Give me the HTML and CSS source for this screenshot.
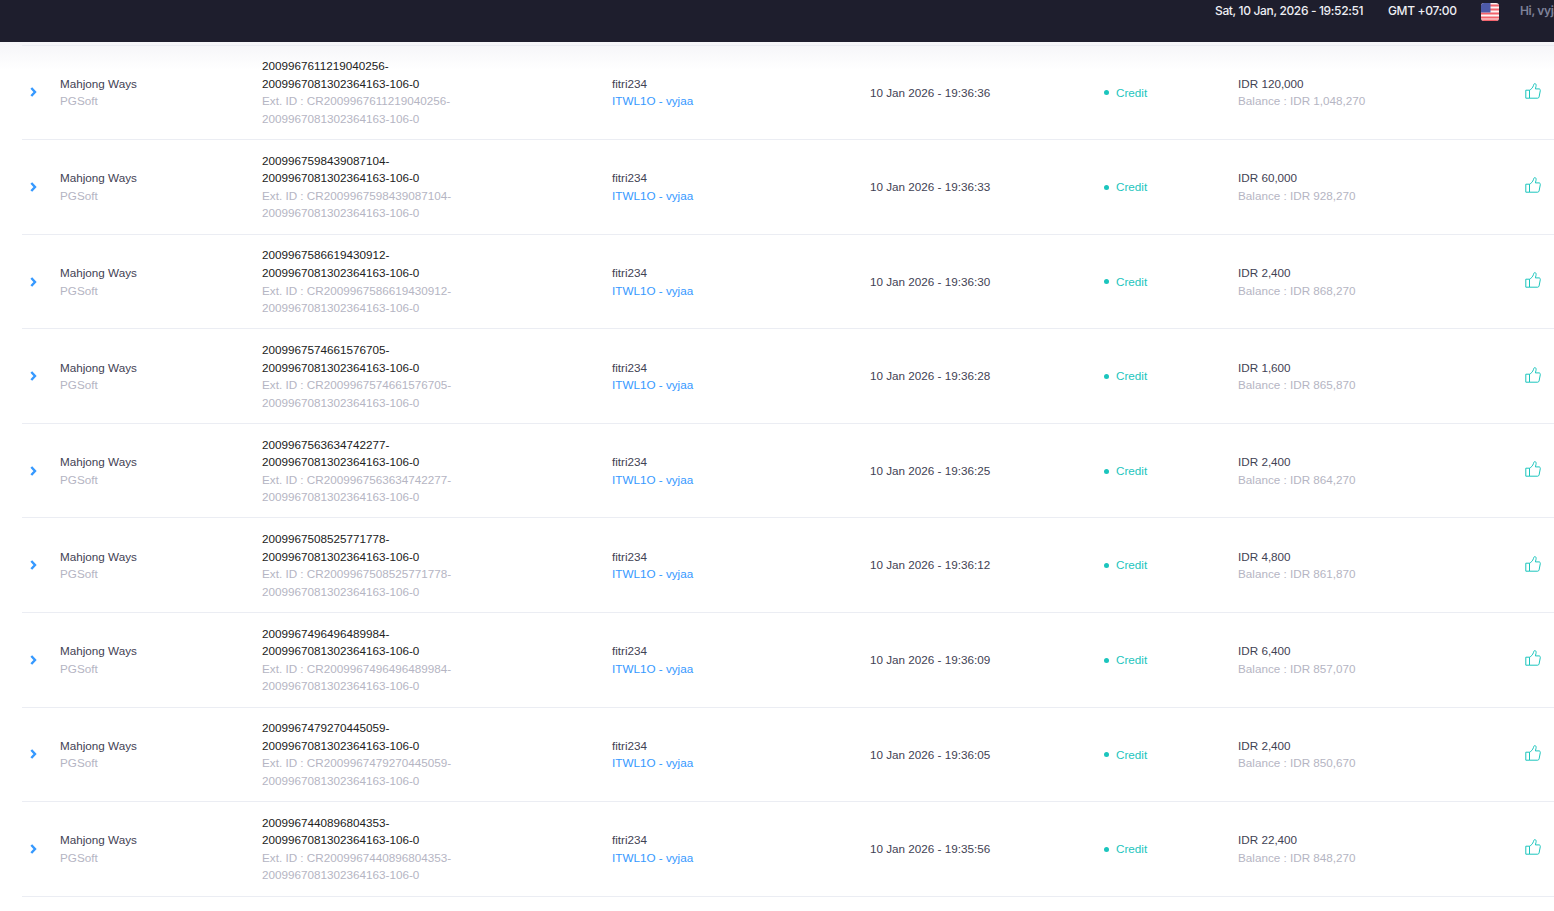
FILE: index.html
```html
<!DOCTYPE html>
<html lang="en">
<head>
    <meta charset="UTF-8">
    <title>Transactions</title>
    <link rel="stylesheet" href="styles.css">
</head>
<body>
    <svg class="sprites" width="0" height="0">
        <symbol id="chevron" viewBox="0 0 7 10"><path d="M1.300 1l3.700 4-3.700 4" fill="none" stroke="currentColor" stroke-width="2.400"/></symbol>
        <symbol id="thumb" viewBox="0 0 16 16"><path d="M4.500 7.200v8H.8v-8zM4.500 7.200c1.800-.9 3.200-2.500 3.900-4.500.3-.9.5-2.100 1.400-2.100 1.300 0 1.500 1.500 1.200 2.800l-.6 2.500h3.600c.9 0 1.500.8 1.300 1.700l-1.200 6.300c-.1.700-.7 1.300-1.400 1.300H4.500" fill="none" stroke="currentColor" stroke-width="1"/></symbol>
    </svg>

    <header class="topbar">
        <span class="topbar-date">Sat, 10 Jan, 2026 - 19:52:51</span>
        <span class="topbar-gmt">GMT +07:00</span>
        <svg class="flag" viewBox="0 0 18 18">
            <rect width="18" height="18" fill="#fdf3f3"/>
            <path d="M0 1.500h18v2H0zM0 5.500h18v2H0zM0 9.500h18v2H0zM0 13.500h18v2H0z" fill="#f2626b"/>
            <path d="M0 16.500h18V18H0z" fill="#f2626b"/>
            <rect width="9.500" height="9.500" fill="#4d5aa8"/>
        </svg>
        <span class="topbar-user">Hi, vyjaa</span>
    </header>

    <main class="list">
        <!-- Baris transaksi -->
        <div class="row">
            <svg class="chevron"><use href="#chevron"/></svg>
            <div><div>Mahjong Ways</div><div class="muted">PGSoft</div></div>
            <div class="ids">2009967611219040256-2009967081302364163-106-0<div class="muted">Ext. ID : CR2009967611219040256-2009967081302364163-106-0</div></div>
            <div><div>fitri234</div><div class="link">ITWL1O - vyjaa</div></div>
            <div>10 Jan 2026 - 19:36:36</div>
            <div class="credit"><span class="dot"></span>Credit</div>
            <div><div>IDR 120,000</div><div class="muted">Balance : IDR 1,048,270</div></div>
            <svg class="thumb"><use href="#thumb"/></svg>
        </div>
        <div class="row">
            <svg class="chevron"><use href="#chevron"/></svg>
            <div><div>Mahjong Ways</div><div class="muted">PGSoft</div></div>
            <div class="ids">2009967598439087104-2009967081302364163-106-0<div class="muted">Ext. ID : CR2009967598439087104-2009967081302364163-106-0</div></div>
            <div><div>fitri234</div><div class="link">ITWL1O - vyjaa</div></div>
            <div>10 Jan 2026 - 19:36:33</div>
            <div class="credit"><span class="dot"></span>Credit</div>
            <div><div>IDR 60,000</div><div class="muted">Balance : IDR 928,270</div></div>
            <svg class="thumb"><use href="#thumb"/></svg>
        </div>
        <div class="row">
            <svg class="chevron"><use href="#chevron"/></svg>
            <div><div>Mahjong Ways</div><div class="muted">PGSoft</div></div>
            <div class="ids">2009967586619430912-2009967081302364163-106-0<div class="muted">Ext. ID : CR2009967586619430912-2009967081302364163-106-0</div></div>
            <div><div>fitri234</div><div class="link">ITWL1O - vyjaa</div></div>
            <div>10 Jan 2026 - 19:36:30</div>
            <div class="credit"><span class="dot"></span>Credit</div>
            <div><div>IDR 2,400</div><div class="muted">Balance : IDR 868,270</div></div>
            <svg class="thumb"><use href="#thumb"/></svg>
        </div>
        <div class="row">
            <svg class="chevron"><use href="#chevron"/></svg>
            <div><div>Mahjong Ways</div><div class="muted">PGSoft</div></div>
            <div class="ids">2009967574661576705-2009967081302364163-106-0<div class="muted">Ext. ID : CR2009967574661576705-2009967081302364163-106-0</div></div>
            <div><div>fitri234</div><div class="link">ITWL1O - vyjaa</div></div>
            <div>10 Jan 2026 - 19:36:28</div>
            <div class="credit"><span class="dot"></span>Credit</div>
            <div><div>IDR 1,600</div><div class="muted">Balance : IDR 865,870</div></div>
            <svg class="thumb"><use href="#thumb"/></svg>
        </div>
        <div class="row">
            <svg class="chevron"><use href="#chevron"/></svg>
            <div><div>Mahjong Ways</div><div class="muted">PGSoft</div></div>
            <div class="ids">2009967563634742277-2009967081302364163-106-0<div class="muted">Ext. ID : CR2009967563634742277-2009967081302364163-106-0</div></div>
            <div><div>fitri234</div><div class="link">ITWL1O - vyjaa</div></div>
            <div>10 Jan 2026 - 19:36:25</div>
            <div class="credit"><span class="dot"></span>Credit</div>
            <div><div>IDR 2,400</div><div class="muted">Balance : IDR 864,270</div></div>
            <svg class="thumb"><use href="#thumb"/></svg>
        </div>
        <div class="row">
            <svg class="chevron"><use href="#chevron"/></svg>
            <div><div>Mahjong Ways</div><div class="muted">PGSoft</div></div>
            <div class="ids">2009967508525771778-2009967081302364163-106-0<div class="muted">Ext. ID : CR2009967508525771778-2009967081302364163-106-0</div></div>
            <div><div>fitri234</div><div class="link">ITWL1O - vyjaa</div></div>
            <div>10 Jan 2026 - 19:36:12</div>
            <div class="credit"><span class="dot"></span>Credit</div>
            <div><div>IDR 4,800</div><div class="muted">Balance : IDR 861,870</div></div>
            <svg class="thumb"><use href="#thumb"/></svg>
        </div>
        <div class="row">
            <svg class="chevron"><use href="#chevron"/></svg>
            <div><div>Mahjong Ways</div><div class="muted">PGSoft</div></div>
            <div class="ids">2009967496496489984-2009967081302364163-106-0<div class="muted">Ext. ID : CR2009967496496489984-2009967081302364163-106-0</div></div>
            <div><div>fitri234</div><div class="link">ITWL1O - vyjaa</div></div>
            <div>10 Jan 2026 - 19:36:09</div>
            <div class="credit"><span class="dot"></span>Credit</div>
            <div><div>IDR 6,400</div><div class="muted">Balance : IDR 857,070</div></div>
            <svg class="thumb"><use href="#thumb"/></svg>
        </div>
        <div class="row">
            <svg class="chevron"><use href="#chevron"/></svg>
            <div><div>Mahjong Ways</div><div class="muted">PGSoft</div></div>
            <div class="ids">2009967479270445059-2009967081302364163-106-0<div class="muted">Ext. ID : CR2009967479270445059-2009967081302364163-106-0</div></div>
            <div><div>fitri234</div><div class="link">ITWL1O - vyjaa</div></div>
            <div>10 Jan 2026 - 19:36:05</div>
            <div class="credit"><span class="dot"></span>Credit</div>
            <div><div>IDR 2,400</div><div class="muted">Balance : IDR 850,670</div></div>
            <svg class="thumb"><use href="#thumb"/></svg>
        </div>
        <div class="row">
            <svg class="chevron"><use href="#chevron"/></svg>
            <div><div>Mahjong Ways</div><div class="muted">PGSoft</div></div>
            <div class="ids">2009967440896804353-2009967081302364163-106-0<div class="muted">Ext. ID : CR2009967440896804353-2009967081302364163-106-0</div></div>
            <div><div>fitri234</div><div class="link">ITWL1O - vyjaa</div></div>
            <div>10 Jan 2026 - 19:35:56</div>
            <div class="credit"><span class="dot"></span>Credit</div>
            <div><div>IDR 22,400</div><div class="muted">Balance : IDR 848,270</div></div>
            <svg class="thumb"><use href="#thumb"/></svg>
        </div>
    </main>
</body>
</html>
```

FILE: styles.css
```css
html, body {
    height: 100%;
}

body {
    margin: 0;
    overflow: hidden;
    background: #fff;
    color: #3f4254;
    font-family: "Liberation Sans", Arial, sans-serif;
    font-size: 11.7px;
    line-height: 1.5;
}

.sprites {
    position: absolute;
}

/* Barra superior */
.topbar {
    display: flex;
    align-items: flex-start;
    width: 1554px;
    height: 42px;
    padding-left: 1215px;
    box-sizing: border-box;
    background: #1e1e2d;
    color: #eeeff4;
    font-family: Inter, sans-serif;
    font-size: 12px;
    font-weight: 500;
    line-height: 22px;
    letter-spacing: -0.35px;
    white-space: nowrap;
    overflow: hidden;
}

.topbar-date {
    flex: none;
    width: 173px;
}

.topbar-gmt {
    flex: none;
    width: 93px;
}

.flag {
    flex: none;
    width: 18px;
    height: 18px;
    margin-top: 3px;
    margin-right: 21px;
    border-radius: 3px;
}

.topbar-user {
    flex: none;
    color: #7e8299;
    font-weight: 600;
}

/* Lista de transacciones */
.list {
    padding: 2.6px 0 0 22px;
    background: linear-gradient(to bottom, #f5f5f8, #fff 28px) no-repeat;
}

.row {
    display: grid;
    grid-template-columns: 38px 202px 350px 258px 233px 135px 287px 16px;
    align-items: center;
    width: 1532px;
    padding: 11.7px 0;
    box-sizing: border-box;
    border-top: 1px solid #ebedf3;
}

.row:last-child {
    border-bottom: 1px solid #ebedf3;
}

.muted {
    color: #b5b5c3;
}

.link {
    color: #3699ff;
}

.ids {
    width: 200px;
    color: #212121;
}

.chevron {
    width: 7px;
    height: 10px;
    margin-left: 8px;
    color: #3699ff;
}

.credit {
    display: flex;
    align-items: center;
    color: #1bc5bd;
}

.dot {
    width: 5px;
    height: 5px;
    margin: 1px 7px 0 1px;
    border-radius: 50%;
    background: #1bc5bd;
}

.thumb {
    width: 16px;
    height: 16px;
    margin-top: -3px;
    color: #1bc5bd;
}
```
